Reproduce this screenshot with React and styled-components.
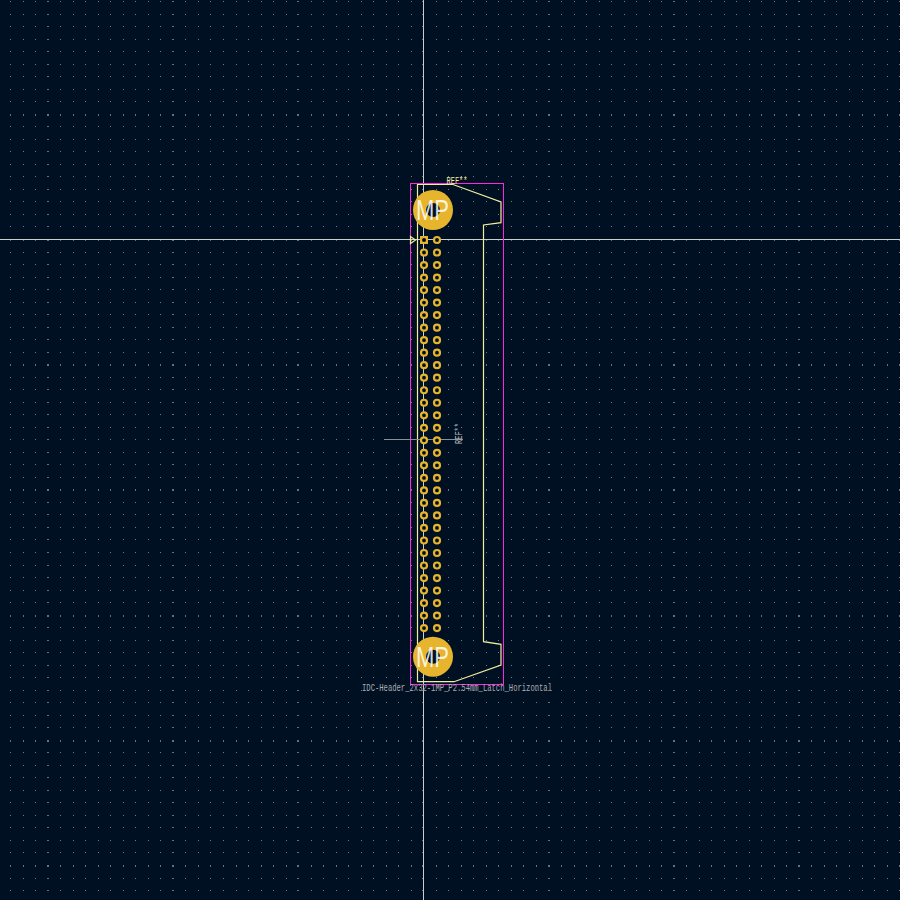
import styled, { createGlobalStyle } from "styled-components"

const GlobalStyle = createGlobalStyle`
    html, body {
        margin: 0;
        padding: 0;
        background: #001023;
    }
`
const Page = styled.div`
    width: 900px;
    height: 900px;
    overflow: hidden;
    background: #001023;
`
const Board = styled.svg`
    display: block;
    width: 900px;
    height: 900px;
`
const GridDots = styled.path`
    fill: ${(p) => (p.$major ? "#66727d" : "#6e7b88")};
    shape-rendering: crispEdges;
`
const Cursor = styled.line`
    stroke: #c9cfc9;
    stroke-width: 1;
    shape-rendering: crispEdges;
`
const Anchor = styled.line`
    stroke: #8a8f92;
    stroke-width: 1;
    shape-rendering: crispEdges;
`
const Courtyard = styled.rect`
    fill: none;
    stroke: #ff26e2;
    stroke-width: 1;
    shape-rendering: crispEdges;
`
const Silk = styled.path`
    fill: none;
    stroke: #f2eda1;
    stroke-width: 1.2;
`
const Pad = styled.circle`
    fill: #001023;
    stroke: #e6b42d;
    stroke-width: 2.2;
`
const SquarePad = styled.rect`
    fill: #e6b42d;
`
const PadHole = styled.circle`
    fill: #001023;
`
const MountPad = styled.circle`
    fill: #e6b42d;
`
const MountHole = styled.circle`
    fill: #001023;
`
const MountLabel = styled.text`
    font-family: "Liberation Sans", sans-serif;
    font-size: 30px;
    font-weight: 400;
    fill: #ffffff;
    fill-opacity: 0.85;
`
const RefText = styled.text`
    font-family: "Liberation Mono", monospace;
    font-size: 10px;
    fill: ${(p) => p.$color};
`

const STEP = 12.52
const ORIGIN_X = 423.8
const ORIGIN_Y = 239.5

// grid points, every 10th column/row gets a wider dot
const buildGrid = () => {
    let minor = ""
    let major = ""
    for (let i = -34; i <= 38; i++) {
        const x = Math.floor(ORIGIN_X + i * STEP)
        for (let j = -19; j <= 53; j++) {
            const y = Math.floor(ORIGIN_Y + j * STEP)
            const wide = i % 10 === 0
            const tall = j % 10 === 0
            if (!wide && !tall) {
                minor += `M${x} ${y}h1v1h-1z`
            } else {
                const w = wide ? 2 : 1
                const h = tall ? 2 : 1
                major += `M${wide ? x - 1 : x} ${y}h${w}v${h}h-${w}z`
            }
        }
    }
    return { minor, major }
}

const grid = buildGrid()
const rows = Array.from({ length: 32 }, (_, i) => 240 + i * STEP)

const App = () => {
    return (
        <Page>
            <GlobalStyle />
            <Board viewBox="0 0 900 900">
                <GridDots d={grid.minor} />
                <GridDots $major d={grid.major} />

                <Cursor x1="423.5" y1="0" x2="423.5" y2="900" />
                <Cursor x1="0" y1="239.5" x2="900" y2="239.5" />

                <Courtyard x="410.5" y="183.5" width="93" height="500.5" />
                <Silk d="M417.5 681.7 V184.5 H453 L501 202 V222.7 L483.5 225 V641.7 L501 644.3 V665 L454 681.7 Z" />
                <Silk d="M410.5 236.5 L415.5 240 L410.5 243.5 Z" />

                <Anchor x1="384" y1="439.5" x2="463" y2="439.5" />

                <SquarePad x="420" y="236" width="8" height="8" />
                <PadHole cx="424" cy="240" r="2" />
                {rows.map((y, i) => (
                    <g key={y}>
                        {i > 0 && <Pad cx="424" cy={y} r="3" />}
                        <Pad cx="437" cy={y} r="3" />
                    </g>
                ))}

                <MountPad cx="433" cy="210" r="20" />
                <MountHole cx="433" cy="210" r="7" />
                <MountLabel x="416" y="220" textLength="33" lengthAdjust="spacingAndGlyphs">MP</MountLabel>
                <MountPad cx="433" cy="656.7" r="20" />
                <MountHole cx="433" cy="656.7" r="7" />
                <MountLabel x="416" y="667" textLength="33" lengthAdjust="spacingAndGlyphs">MP</MountLabel>

                <RefText $color="#f2eda1" x="446.5" y="184" textLength="21" lengthAdjust="spacingAndGlyphs">REF**</RefText>
                <RefText $color="#b0b4b6" x="462" y="444" textLength="21" lengthAdjust="spacingAndGlyphs" transform="rotate(-90 462 444)">REF**</RefText>
                <RefText $color="#a9adb0" x="362" y="690.5" textLength="190" lengthAdjust="spacingAndGlyphs">IDC-Header_2x32-1MP_P2.54mm_Latch_Horizontal</RefText>
            </Board>
        </Page>
    )
}

export default App
